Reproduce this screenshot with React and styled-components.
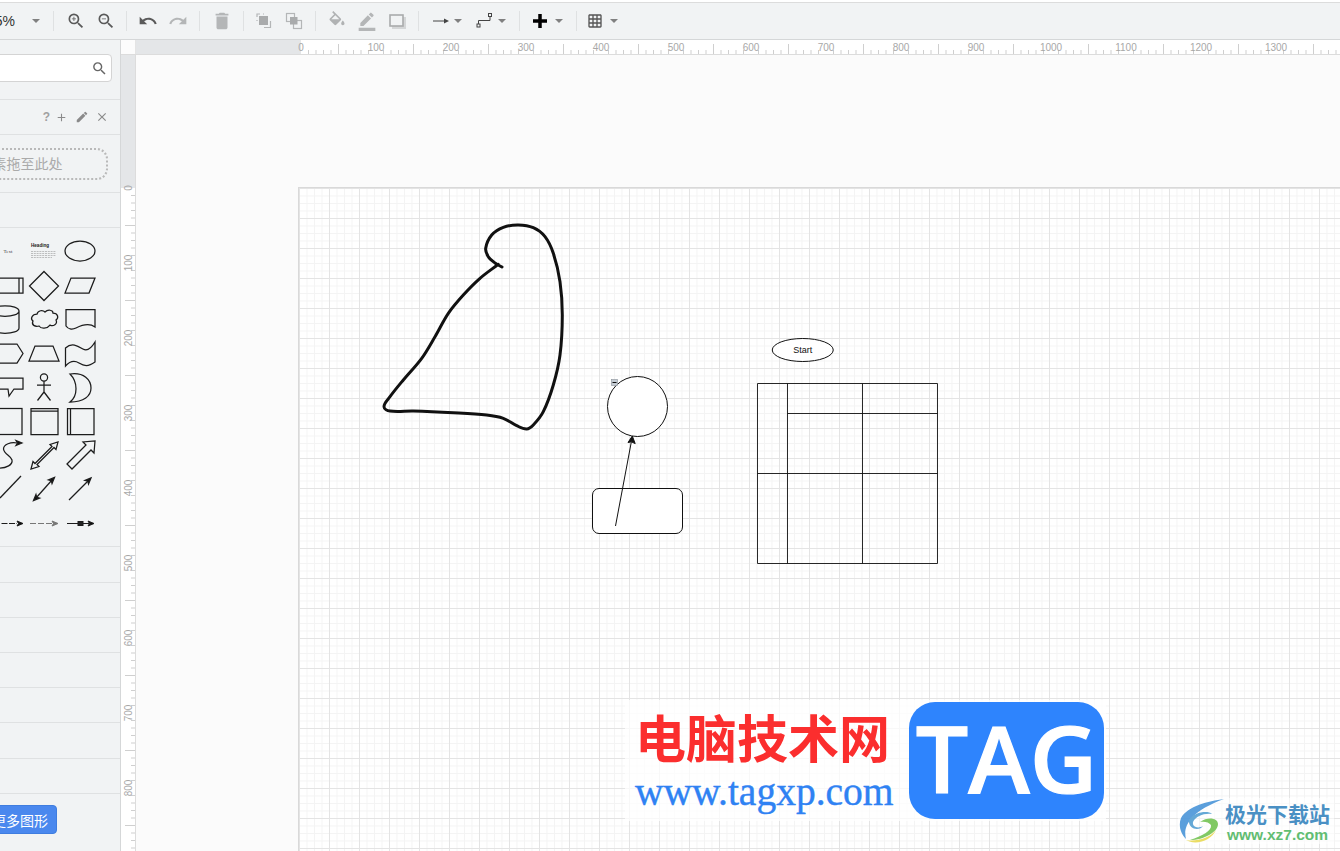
import React from 'react';
import styled, { createGlobalStyle } from 'styled-components';
import {
  MdZoomIn,
  MdZoomOut,
  MdUndo,
  MdRedo,
  MdDelete,
  MdBorderColor,
  MdAdd,
  MdGridOn,
  MdSearch,
  MdEdit,
  MdClose,
} from 'react-icons/md';

const GlobalStyle = createGlobalStyle`
  html, body {
    margin: 0;
    height: 100%;
    overflow: hidden;
    background: #fff;
    font-family: "Liberation Sans", Arial, "Noto Sans CJK SC", sans-serif;
  }
  #root { height: 100%; }
`;

// Layout
const Shell = styled.div`
  position: relative;
  display: flex;
  flex-direction: column;
  width: 1340px;
  height: 851px;
  overflow: hidden;
  padding-top: 2px;
  box-sizing: border-box;
  background: #fff;
`;

const Toolbar = styled.div`
  flex: none;
  height: 38px;
  box-sizing: border-box;
  border-top: 1px solid #dcdcdc;
  border-bottom: 1px solid #d5d7d8;
  background: #f1f3f4;
  overflow: hidden;
`;

const ToolbarRow = styled.div`
  display: flex;
  align-items: center;
  height: 36px;
  margin-left: -13px;
`;

const ZoomBox = styled.div`
  display: flex;
  align-items: center;
  width: 60px;
  flex: none;
  font-size: 14px;
  color: #333;
  gap: 17px;
`;

const Sep = styled.div`
  flex: none;
  width: 1px;
  height: 20px;
  margin: 0 6px;
  background: #dfe1e2;
`;

const ToolBtn = styled.div`
  flex: none;
  width: ${(p) => p.$w || 30}px;
  height: 30px;
  display: flex;
  align-items: center;
  justify-content: center;
  color: ${(p) => (p.$off ? '#b4b6b7' : '#5a5a5a')};
`;

const DropBtn = styled.div`
  flex: none;
  width: ${(p) => p.$w}px;
  height: 30px;
  box-sizing: border-box;
  padding-left: ${(p) => p.$pad}px;
  display: flex;
  align-items: center;
  gap: ${(p) => p.$gap}px;
  color: #444;
`;

const Caret = styled.span`
  flex: none;
  width: 0;
  height: 0;
  border-left: 4px solid transparent;
  border-right: 4px solid transparent;
  border-top: 4px solid #808080;
`;

const Body = styled.div`
  flex: 1;
  display: flex;
  min-height: 0;
`;

// Sidebar
const Sidebar = styled.aside`
  flex: none;
  width: 121px;
  border-right: 1px solid #d5d7d8;
  box-sizing: border-box;
  background: #f1f3f4;
  overflow: hidden;
`;

const SidebarInner = styled.div`
  width: 214px;
  margin-left: -94px;
`;

const Section = styled.div`
  height: ${(p) => p.$h}px;
  box-sizing: border-box;
  border-bottom: 1px solid #dfe1e2;
`;

const SearchWrap = styled(Section)`
  padding: 14px 8px 0 8px;
`;

const SearchBox = styled.div`
  height: 28px;
  box-sizing: border-box;
  background: #fff;
  border: 1px solid #d4d4d4;
  border-radius: 4px;
  display: flex;
  align-items: center;
  justify-content: flex-end;
  padding-right: 3px;
  color: #666;
`;

const PadHeader = styled(Section)`
  display: flex;
  align-items: center;
  justify-content: flex-end;
  padding-right: 11px;
  color: #8a8a8a;
`;

const Help = styled.span`
  font-size: 12px;
  font-weight: bold;
  color: #a0a0a0;
  margin-right: 5px;
`;

const PadIcon = styled.span`
  display: flex;
  margin-left: ${(p) => p.$ml || 0}px;
`;

const DropWrap = styled(Section)`
  padding: 13px 12px 0 13px;
`;

const DropZone = styled.div`
  height: 32px;
  box-sizing: border-box;
  border: 2px dotted #b9b9b9;
  border-radius: 11px;
  padding-bottom: 2px;
  display: flex;
  align-items: center;
  justify-content: center;
  font-size: 14px;
  color: #aaa;
`;

const ShapeGrid = styled.div`
  display: grid;
  grid-template-columns: repeat(3, 36px);
  grid-auto-rows: 34px;
  padding: 6px 0 0 84px;
`;

const Thumb = styled.svg`
  display: block;
  width: 36px;
  height: 34px;
  overflow: visible;
`;

const MoreWrap = styled.div`
  padding: 11px 0 0 77px;
`;

const MoreBtn = styled.div`
  width: 74px;
  height: 29px;
  box-sizing: border-box;
  border-radius: 4px;
  background: #4a88ee;
  border: 1px solid #3f7ddf;
  color: #fff;
  font-size: 14px;
  display: flex;
  align-items: center;
  justify-content: center;
`;

// Rulers and canvas
const Workspace = styled.div`
  flex: 1;
  display: flex;
  flex-direction: column;
  min-width: 0;
`;

const RulerRow = styled.div`
  flex: none;
  display: flex;
  height: 15px;
  box-sizing: border-box;
  border-bottom: 1px solid #dcdcdc;
`;

const Corner = styled.div`
  flex: none;
  width: 15px;
  background: #fcfcfc;
  border-right: 1px solid #e4e4e4;
  box-sizing: border-box;
`;

const RulerSvg = styled.svg`
  display: block;
  flex: none;
  font-family: "Liberation Sans", Arial, sans-serif;
  font-size: 10px;
`;

const CanvasRow = styled.div`
  flex: 1;
  display: flex;
  min-height: 0;
`;

const LeftRuler = styled.div`
  flex: none;
  width: 15px;
  box-sizing: border-box;
  border-right: 1px solid #dcdcdc;
  overflow: hidden;
`;

const Canvas = styled.div`
  flex: 1;
  box-sizing: border-box;
  padding: 132px 0 0 162px;
  background: #fbfbfb;
  display: flex;
  overflow: hidden;
`;

const Page = styled.div`
  position: relative;
  flex: 1;
  border-top: 1px solid #d9d9d9;
  border-left: 1px solid #d9d9d9;
  background-color: #fff;
  background-image:
    linear-gradient(to right, #e4e4e4 1px, transparent 1px),
    linear-gradient(to bottom, #e4e4e4 1px, transparent 1px),
    linear-gradient(to right, #f4f4f4 1px, transparent 1px),
    linear-gradient(to bottom, #f4f4f4 1px, transparent 1px);
  background-size: 30px 30px, 30px 30px, 7.5px 7.5px, 7.5px 7.5px;
`;

const Diagram = styled.svg`
  position: absolute;
  left: 0;
  top: 0;
  width: 100%;
  height: 100%;
`;

// Watermarks on top of the page
const Watermark = styled.div`
  position: absolute;
  left: 625px;
  top: 700px;
  width: 481px;
  height: 121px;
  display: flex;
  background: rgba(255, 255, 255, 0.72);
`;

const WatermarkText = styled.div`
  width: 284px;
  flex: none;
  display: flex;
  flex-direction: column;
  padding-left: 10px;
  box-sizing: border-box;
`;

const WatermarkTitle = styled.div`
  font-family: "Noto Sans CJK SC", sans-serif;
  font-weight: 700;
  font-size: 51px;
  line-height: 72px;
  height: 64px;
  color: #fb2e2e;
  white-space: nowrap;
`;

const WatermarkUrl = styled.div`
  font-family: "Liberation Serif", serif;
  font-size: 39.5px;
  line-height: 42px;
  margin-top: 7px;
  color: #2f82f3;
  -webkit-text-stroke: 0.4px #2f82f3;
  white-space: nowrap;
`;

const TagBadge = styled.div`
  width: 195px;
  height: 117px;
  margin-top: 2px;
  border-radius: 26px;
  background: #2e84fd;
  color: #fff;
  font-family: "Open Sans", sans-serif;
  font-weight: 600;
  font-size: 93px;
  line-height: 110px;
  text-align: center;
  -webkit-text-stroke: 1.2px #fff;
`;

const XzMark = styled.div`
  position: absolute;
  left: 1178px;
  top: 798px;
  width: 156px;
  height: 46px;
  display: flex;
  gap: 1px;
  background: rgba(255, 255, 255, 0.55);
`;

const XzText = styled.div`
  display: flex;
  flex-direction: column;
  padding-top: 2px;
`;

const XzTitle = styled.div`
  font-family: "Noto Sans CJK SC", sans-serif;
  font-weight: 700;
  font-size: 21px;
  line-height: 26px;
  color: #4a90c4;
  white-space: nowrap;
`;

const XzUrl = styled.div`
  font-family: "Liberation Sans", sans-serif;
  font-weight: bold;
  font-size: 15.5px;
  line-height: 17px;
  color: #62bd72;
  padding-left: 2px;
  white-space: nowrap;
`;

// Rulers
const TopRuler = () => {
  const w = 1205;
  const x0 = 165;
  const ticks = [];
  for (let i = 0; x0 + i * 7.5 < w; i++) {
    const x = x0 + i * 7.5;
    const long = i % 5 === 0 && i % 10 !== 0;
    if (i % 10 === 0) continue;
    ticks.push(<line key={i} x1={x} x2={x} y1={long ? 4 : 10} y2={14} stroke="#cfcfcf" />);
  }
  const labels = [];
  for (let v = 0; v <= 1300; v += 100) {
    labels.push(
      <text key={v} x={x0 + v * 0.75} y={11} textAnchor="middle" fill="#a8a8a8">{v}</text>
    );
  }
  return (
    <RulerSvg width={w} height={14}>
      <rect x={0} y={0} width={x0} height={14} fill="#e4e6e8" />
      {ticks}
      {labels}
    </RulerSvg>
  );
};

const SideRuler = () => {
  const h = 797;
  const y0 = 133;
  const ticks = [];
  for (let i = 1; y0 + i * 7.5 < h; i++) {
    const y = y0 + i * 7.5;
    const long = i % 5 === 0 && i % 10 !== 0;
    if (i % 10 === 0) continue;
    ticks.push(<line key={i} x1={long ? 4 : 10} x2={14} y1={y} y2={y} stroke="#cfcfcf" />);
  }
  const labels = [];
  for (let v = 0; v <= 800; v += 100) {
    const y = y0 + v * 0.75;
    labels.push(
      <text key={v} transform={`translate(11 ${y}) rotate(-90)`} textAnchor="middle" fill="#a8a8a8">{v}</text>
    );
  }
  return (
    <RulerSvg width={14} height={h}>
      <rect x={0} y={0} width={14} height={y0} fill="#e4e6e8" />
      {ticks}
      {labels}
    </RulerSvg>
  );
};

// Toolbar icons that the icon package does not have in this form
const ToFrontIcon = () => (
  <svg width="18" height="18" viewBox="0 0 18 18">
    <path d="M2 5V2h3M8 2h1M2 8v1" fill="none" stroke="#b4b6b7" strokeWidth="1.2" />
    <rect x="4" y="4" width="9" height="9" fill="#a9abac" />
    <path d="M15.5 9v6.5H9" fill="none" stroke="#b4b6b7" strokeWidth="1.2" />
  </svg>
);

const ToBackIcon = () => (
  <svg width="18" height="18" viewBox="0 0 18 18">
    <rect x="1.5" y="1.5" width="8" height="8" fill="none" stroke="#b4b6b7" strokeWidth="1.2" />
    <rect x="8.5" y="8.5" width="8" height="8" fill="none" stroke="#b4b6b7" strokeWidth="1.2" />
    <rect x="5" y="5" width="7.5" height="7.5" fill="#a9abac" />
  </svg>
);

const FillIcon = () => (
  <svg width="20" height="20" viewBox="0 0 24 24" fill="#b0b2b3">
    <path d="M16.56 8.94 7.62 0 6.21 1.41l2.38 2.38-5.15 5.15c-.59.59-.59 1.54 0 2.12l5.5 5.5c.29.29.68.44 1.06.44s.77-.15 1.06-.44l5.5-5.5c.59-.58.59-1.53 0-2.12zM5.21 10 10 5.21 14.79 10H5.21zM19 11.5s-2 2.17-2 3.5c0 1.1.9 2 2 2s2-.9 2-2c0-1.33-2-3.5-2-3.5z" />
  </svg>
);

const ShadowIcon = () => (
  <svg width="18" height="18" viewBox="0 0 18 18">
    <rect x="4" y="5" width="14" height="12" fill="#d4d6d7" />
    <rect x="2" y="3" width="13" height="11" fill="#f1f3f4" stroke="#a9abac" strokeWidth="1.6" />
  </svg>
);

const ArrowIcon = () => (
  <svg width="16" height="10" viewBox="0 0 16 10">
    <path d="M0 5h13" stroke="#444" strokeWidth="1" fill="none" />
    <path d="M11 2.5 16 5l-5 2.5z" fill="#444" />
  </svg>
);

const WaypointIcon = () => (
  <svg width="16" height="16" viewBox="0 0 16 16" fill="none" stroke="#444">
    <path d="M2.5 11V7.5h11.500V3.500" />
    <rect x="1" y="11" width="3" height="3" />
    <rect x="12.500" y="0.500" width="3" height="3" />
  </svg>
);

const PlusIcon = () => (
  <svg width="14" height="14" viewBox="0 0 14 14" fill="#000">
    <path d="M5.250 0h3.500v5.250H14v3.500H8.750V14h-3.500V8.750H0v-3.500h5.250z" />
  </svg>
);

// Sidebar palette: shapes are drawn in screen coordinates, the viewBox frames each cell
const CELLS = [8, 44, 80];
const ROWS = [251, 285, 319, 353, 387, 421, 455, 489, 523];

const head = (x, y, dx, dy) => {
  const l = Math.hypot(dx, dy);
  const ux = dx / l;
  const uy = dy / l;
  return `M${x} ${y}L${x - ux * 6 - uy * 2.5} ${y - uy * 6 + ux * 2.5}L${x - ux * 4.5} ${y - uy * 4.5}L${x - ux * 6 + uy * 2.5} ${y - uy * 6 - ux * 2.5}Z`;
};

const SHAPES = [
  [
    <text x="8" y="253" textAnchor="middle" fontSize="5" fontFamily="Liberation Serif, serif" fill="#444" stroke="none">Text</text>,
    <g>
      <text x="31" y="247" fontSize="4.6" fontWeight="bold" fontFamily="Liberation Sans, sans-serif" fill="#222" stroke="none">Heading</text>
      <path d="M31 251.500h25M31 253.500h25M31 255.500h25M31 257.500h21" stroke="#999" strokeWidth=".6" strokeDasharray="2 .8" />
    </g>,
    <ellipse cx="80" cy="251" rx="15" ry="10" />,
  ],
  [
    <path d="M-8 278H23V293H-8ZM19 278V293" />,
    <path d="M44 271.500 58.500 286 44 300.500 29.500 286Z" />,
    <path d="M71 278H95L89 293H65Z" />,
  ],
  [
    <path d="M-9 311C-9 304 19 304 19 311V328C19 335 -9 335 -9 328ZM-9 311C-9 318 19 318 19 311" />,
    <path d="M37 314C38 310 43 310 45 312C48 309 53 310 53 313C58 313 59 318 56 320C58 324 53 327 50 325C47 329 41 329 39 326C35 327 31 325 33 321C30 319 32 314 37 314Z" />,
    <path d="M66 309.500H95V327C88 322 80 326 76 328C72 330 68 329 66 326Z" />,
  ],
  [
    <path d="M-8 344H17L23 353.500 17 363H-8Z" />,
    <path d="M35 346H53L59 361H29Z" />,
    <path d="M65.500 348C72 342 78 346 83 349C88 352 92 347 95 342V362C88 367 84 366 79 363C74 360 70 361 65.500 366Z" />,
  ],
  [
    <path d="M-8 378H23V389H14L9 396 8 389H-8Z" />,
    <path d="M44 381A3.600 3.600 0 1 1 44 373.800A3.600 3.600 0 1 1 44 381M44 381V392M37 385H51M44 392 37.500 400.500M44 392 50.500 400.500" />,
    <path d="M70 374C84 372 91 380 91 388C91 396 84 402 70 402C78 396 78 382 70 374Z" />,
  ],
  [
    <rect x="-8" y="408.500" width="30" height="26" />,
    <path d="M31 408.500H58V434.500H31ZM31 411H58" />,
    <path d="M67.500 408.500H94V434.500H67.500ZM70.500 408.500V434.500" />,
  ],
  [
    <g>
      <path d="M0 468C6 468 13 465 12 460C11 456 4 454 3.500 449C3.500 444 11 442 17 443" />
      <path d={head(22, 443, 5, 0)} fill="#111" />
    </g>,
    <path d="M31 469 33 461.500 35 463.500 52 446.500 50 444.500 58 442 56 449.500 54 447.500 37 464.500 39 466.500Z" />,
    <path d="M67 464 86 445 83 442 95 441 94 453 91 450 72 469Z" />,
  ],
  [
    <path d="M0 498L21 476" />,
    <g>
      <path d="M36 498 52 480" />
      <path d={head(54.500, 477.500, 1, -1)} fill="#111" />
      <path d={head(33.500, 500.500, -1, 1)} fill="#111" />
    </g>,
    <g>
      <path d="M69 500 88 481" />
      <path d={head(91, 478, 1, -1)} fill="#111" />
    </g>,
  ],
  [
    <g strokeWidth="1">
      <path d="M-6 523.500H17" strokeDasharray="6 1.500" />
      <path d={head(23, 523.500, 1, 0)} fill="#111" />
    </g>,
    <g stroke="#777" strokeWidth="1">
      <path d="M30 523.500H52" strokeDasharray="6 2" />
      <path d={head(58, 523.500, 1, 0)} fill="#777" />
    </g>,
    <g strokeWidth="1">
      <path d="M67 523.500H89" />
      <rect x="78" y="521.500" width="5" height="4" fill="#222" />
      <path d={head(94, 523.500, 1, 0)} fill="#111" />
    </g>,
  ],
];

const ShapeThumb = ({ cx, cy, children }) => (
  <Thumb
    viewBox={`${cx - 18} ${cy - 17} 36 34`}
    fill="none"
    stroke="#1c1c1c"
    strokeWidth="1.25"
  >
    {children}
  </Thumb>
);

// Free hand curve, traced points
const FREEHAND = [
  [502, 267], [495, 263], [488.3, 256.7], [485.7, 248.3], [491.7, 235], [503.3, 227.3], [518.3, 225], [533.3, 227.7],
  [545, 236.7], [553.3, 253.3], [560, 281.7], [562.3, 315], [560, 355], [553.3, 385], [543.3, 411.7],
  [533.3, 425], [526.7, 429], [516.7, 425.7], [503.3, 418.3], [486.7, 415], [453.3, 412.7], [413.3, 411],
  [390, 411], [384, 406.7], [390, 396.7], [403.3, 380], [421.7, 358.3], [435, 336.7], [448.3, 313.3],
  [463.3, 295], [480, 278.3], [498.3, 264.3],
];

// Tangents scaled by chord length, so uneven points don't overshoot
const smooth = (pts) => {
  const unit = (a, b) => {
    const l = Math.hypot(b[0] - a[0], b[1] - a[1]) || 1;
    return [(b[0] - a[0]) / l, (b[1] - a[1]) / l];
  };
  let d = `M${pts[0][0]} ${pts[0][1]}`;
  for (let i = 0; i < pts.length - 1; i++) {
    const p1 = pts[i];
    const p2 = pts[i + 1];
    const t1 = unit(pts[Math.max(i - 1, 0)], p2);
    const t2 = unit(p1, pts[Math.min(i + 2, pts.length - 1)]);
    const k = Math.hypot(p2[0] - p1[0], p2[1] - p1[1]) / 3;
    d += `C${p1[0] + t1[0] * k} ${p1[1] + t1[1] * k} ${p2[0] - t2[0] * k} ${p2[1] - t2[1] * k} ${p2[0]} ${p2[1]}`;
  }
  return d;
};

const DiagramLayer = () => (
  <Diagram>
    <g transform="translate(-299 -188)" fill="none" stroke="#111" strokeWidth="1">
      <path d={smooth(FREEHAND)} strokeWidth="3" strokeLinecap="round" strokeLinejoin="round" />
      <circle cx="637.500" cy="406.500" r="30" fill="#fff" />
      <g>
        <rect x="611.500" y="379.500" width="6" height="6" fill="#c4ccd4" stroke="#8b9299" strokeWidth=".6" />
        <path d="M612.500 382.500h4" />
      </g>
      <rect x="592.500" y="488.500" width="90" height="45" rx="6.500" fill="#fff" />
      <path d="M615.500 526 631.300 442" />
      <path d="M632.300 436 635.200 443.600 631.400 441.800 628 442.500Z" fill="#111" />
      <ellipse cx="802.750" cy="350" rx="30.500" ry="11.500" fill="#fff" />
      <text x="802.750" y="353" textAnchor="middle" fontSize="9" fontFamily="Liberation Sans, sans-serif" fill="#111" stroke="none">Start</text>
      <path d="M757.500 383.500H937.500V563.500H757.500ZM787.500 383.500V563.500M862.500 383.500V563.500M787.500 413.500H937.500M757.500 473.500H937.500" strokeOpacity=".9" />
    </g>
  </Diagram>
);

const App = () => {
  return (
    <Shell>
      <GlobalStyle />
      <Toolbar>
        <ToolbarRow>
          <ZoomBox>
            <span>75%</span>
            <Caret />
          </ZoomBox>
          <Sep />
          <ToolBtn $w={32}><MdZoomIn size={20} /></ToolBtn>
          <ToolBtn $w={28}><MdZoomOut size={20} /></ToolBtn>
          <Sep />
          <ToolBtn><MdUndo size={20} /></ToolBtn>
          <ToolBtn $off><MdRedo size={20} /></ToolBtn>
          <Sep />
          <ToolBtn $w={31} $off><MdDelete size={22} /></ToolBtn>
          <Sep />
          <ToolBtn $w={28} $off><ToFrontIcon /></ToolBtn>
          <ToolBtn $w={31} $off><ToBackIcon /></ToolBtn>
          <Sep />
          <ToolBtn $off><FillIcon /></ToolBtn>
          <ToolBtn $off><MdBorderColor size={20} /></ToolBtn>
          <ToolBtn $off><ShadowIcon /></ToolBtn>
          <Sep />
          <DropBtn $w={43} $pad={8} $gap={5}><ArrowIcon /><Caret /></DropBtn>
          <DropBtn $w={45} $pad={8} $gap={6}><WaypointIcon /><Caret /></DropBtn>
          <Sep />
          <DropBtn $w={44} $pad={7} $gap={8}><PlusIcon /><Caret /></DropBtn>
          <Sep />
          <DropBtn $w={44} $pad={4} $gap={7}><MdGridOn size={16} color="#555" /><Caret /></DropBtn>
        </ToolbarRow>
      </Toolbar>
      <Body>
        <Sidebar>
          <SidebarInner>
            <SearchWrap $h={60}>
              <SearchBox><MdSearch size={17} /></SearchBox>
            </SearchWrap>
            <PadHeader $h={35}>
              <Help>?</Help>
              <PadIcon><MdAdd size={13} /></PadIcon>
              <PadIcon $ml={7}><MdEdit size={14} /></PadIcon>
              <PadIcon $ml={6}><MdClose size={14} /></PadIcon>
            </PadHeader>
            <DropWrap $h={58}>
              <DropZone>将元素拖至此处</DropZone>
            </DropWrap>
            <Section $h={35} />
            <Section $h={319}>
              <ShapeGrid>
                {SHAPES.map((row, r) =>
                  row.map((shape, c) => (
                    <ShapeThumb key={`${r}-${c}`} cx={CELLS[c]} cy={ROWS[r]}>{shape}</ShapeThumb>
                  ))
                )}
              </ShapeGrid>
            </Section>
            <Section $h={36} />
            <Section $h={35} />
            <Section $h={35} />
            <Section $h={35} />
            <Section $h={35} />
            <Section $h={36} />
            <Section $h={35} />
            <MoreWrap>
              <MoreBtn>更多图形</MoreBtn>
            </MoreWrap>
          </SidebarInner>
        </Sidebar>
        <Workspace>
          <RulerRow>
            <Corner />
            <TopRuler />
          </RulerRow>
          <CanvasRow>
            <LeftRuler><SideRuler /></LeftRuler>
            <Canvas>
              <Page>
                <DiagramLayer />
              </Page>
            </Canvas>
          </CanvasRow>
        </Workspace>
      </Body>
      <Watermark>
        <WatermarkText>
          <WatermarkTitle>电脑技术网</WatermarkTitle>
          <WatermarkUrl>www.tagxp.com</WatermarkUrl>
        </WatermarkText>
        <TagBadge>TAG</TagBadge>
      </Watermark>
      <XzMark>
        <svg width="46" height="46" viewBox="0 0 46 46" opacity=".85">
          <path d="M46 1C30 3 10 8 3 20C0 28 3 36 8 41C5 30 10 14 46 1Z" fill="#3f8fd6" />
          <path d="M11 22C16 14 30 12 34 16C26 15 18 18 15 24C14 29 20 31 25 28C22 33 10 32 11 22Z" fill="#4a9ad0" />
          <path d="M22 24C30 18 40 20 40 26C40 34 26 42 12 42C24 38 34 33 33 27C31 24 26 23 22 24Z" fill="#6cc04a" />
          <path d="M8 42C18 44 32 40 38 32C34 42 18 48 8 42Z" fill="#e8d84a" />
        </svg>
        <XzText>
          <XzTitle>极光下载站</XzTitle>
          <XzUrl>www.xz7.com</XzUrl>
        </XzText>
      </XzMark>
    </Shell>
  );
};

export default App;
